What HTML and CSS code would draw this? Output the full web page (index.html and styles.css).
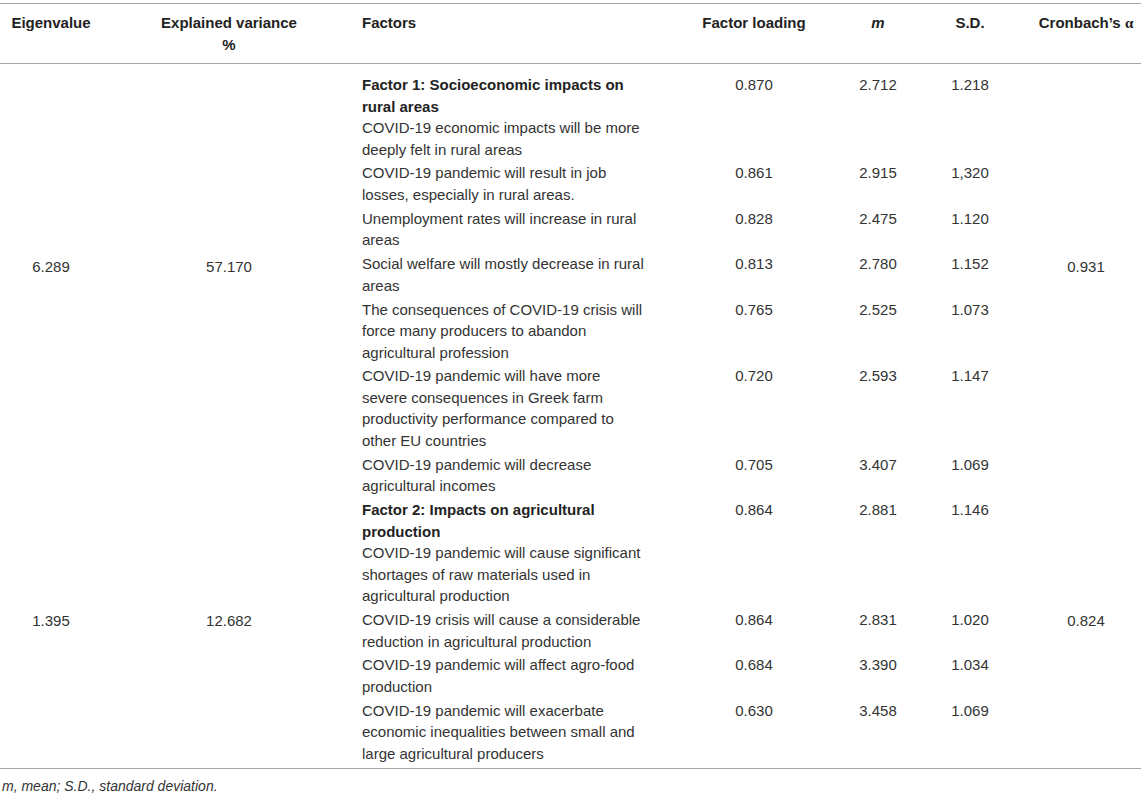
FILE: index.html
```html
<!DOCTYPE html>
<html lang="en">

<head>
    <meta charset="UTF-8">
    <meta name="viewport" content="width=device-width, initial-scale=1.0">
    <title>Factor analysis</title>
    <link rel="stylesheet" href="styles.css">
</head>

<body>
    <div class="table-wrap">
        <table class="data-table">
            <colgroup>
                <col class="col-eigen">
                <col class="col-variance">
                <col class="col-factors">
                <col class="col-loading">
                <col class="col-mean">
                <col class="col-sd">
                <col class="col-alpha">
            </colgroup>
            <thead>
                <tr>
                    <th>Eigenvalue</th>
                    <th>Explained variance<br>%</th>
                    <th class="text-left">Factors</th>
                    <th>Factor loading</th>
                    <th><em>m</em></th>
                    <th>S.D.</th>
                    <th class="alpha">Cronbach’s <span class="greek">α</span></th>
                </tr>
            </thead>
            <tbody>
                <tr>
                    <td class="group-cell" rowspan="7">6.289</td>
                    <td class="group-cell" rowspan="7">57.170</td>
                    <td class="text-left">
                        <div class="factor-title">Factor 1: Socioeconomic impacts on rural areas</div>
                        COVID-19 economic impacts will be more deeply felt in rural areas
                    </td>
                    <td>0.870</td>
                    <td>2.712</td>
                    <td>1.218</td>
                    <td class="group-cell alpha" rowspan="7">0.931</td>
                </tr>
                <tr>
                    <td class="text-left">COVID-19 pandemic will result in job losses, especially in rural areas.</td>
                    <td>0.861</td>
                    <td>2.915</td>
                    <td>1,320</td>
                </tr>
                <tr>
                    <td class="text-left">Unemployment rates will increase in rural areas</td>
                    <td>0.828</td>
                    <td>2.475</td>
                    <td>1.120</td>
                </tr>
                <tr>
                    <td class="text-left">Social welfare will mostly decrease in rural areas</td>
                    <td>0.813</td>
                    <td>2.780</td>
                    <td>1.152</td>
                </tr>
                <tr>
                    <td class="text-left">The consequences of COVID-19 crisis will force many producers to abandon agricultural profession</td>
                    <td>0.765</td>
                    <td>2.525</td>
                    <td>1.073</td>
                </tr>
                <tr>
                    <td class="text-left">COVID-19 pandemic will have more severe consequences in Greek farm productivity performance compared to other EU countries</td>
                    <td>0.720</td>
                    <td>2.593</td>
                    <td>1.147</td>
                </tr>
                <tr>
                    <td class="text-left">COVID-19 pandemic will decrease agricultural incomes</td>
                    <td>0.705</td>
                    <td>3.407</td>
                    <td>1.069</td>
                </tr>
                <tr>
                    <td class="group-cell group-last" rowspan="4">1.395</td>
                    <td class="group-cell group-last" rowspan="4">12.682</td>
                    <td class="text-left">
                        <div class="factor-title">Factor 2: Impacts on agricultural production</div>
                        COVID-19 pandemic will cause significant shortages of raw materials used in agricultural production
                    </td>
                    <td>0.864</td>
                    <td>2.881</td>
                    <td>1.146</td>
                    <td class="group-cell group-last alpha" rowspan="4">0.824</td>
                </tr>
                <tr>
                    <td class="text-left">COVID-19 crisis will cause a considerable reduction in agricultural production</td>
                    <td>0.864</td>
                    <td>2.831</td>
                    <td>1.020</td>
                </tr>
                <tr>
                    <td class="text-left">COVID-19 pandemic will affect agro-food production</td>
                    <td>0.684</td>
                    <td>3.390</td>
                    <td>1.034</td>
                </tr>
                <tr>
                    <td class="text-left">COVID-19 pandemic will exacerbate economic inequalities between small and large agricultural producers</td>
                    <td>0.630</td>
                    <td>3.458</td>
                    <td>1.069</td>
                </tr>
            </tbody>
        </table>
        <p class="table-note"><em>m, mean; S.D., standard deviation.</em></p>
    </div>
</body>

</html>
```

FILE: styles.css
```css
body {
    margin: 0;
    padding: 0;
    background-color: #ffffff;
    font-family: "Liberation Sans", Arial, sans-serif;
    color: #333333;
}

.table-wrap {
    padding-top: 3px;
}

.data-table {
    width: 1141px;
    border-collapse: collapse;
    table-layout: fixed;
    font-size: 15px;
}

.col-eigen {
    width: 102px;
}

.col-variance {
    width: 254px;
}

.col-factors {
    width: 334px;
}

.col-loading {
    width: 128px;
}

.col-mean {
    width: 120px;
}

.col-sd {
    width: 64px;
}

.col-alpha {
    width: 139px;
}

.data-table thead tr {
    border-top: 1px solid #a4a4a4;
    border-bottom: 1px solid #a4a4a4;
}

.data-table th {
    padding: 8px 5px 7px;
    line-height: 22px;
    font-weight: bold;
    color: #222222;
    text-align: center;
    vertical-align: top;
}

.data-table td {
    padding: 1.2px 5px;
    line-height: 21.5px;
    text-align: center;
    vertical-align: top;
}

.data-table tbody tr:first-child td {
    padding-top: 10px;
}

.data-table tbody tr:last-child {
    border-bottom: 1px solid #a4a4a4;
}

.data-table tbody tr:last-child td {
    padding-bottom: 4px;
}

.data-table td.group-cell {
    vertical-align: middle;
    padding-bottom: 38px;
}

.data-table td.group-last {
    padding-bottom: 26px;
}

.data-table .text-left {
    text-align: left;
    padding-left: 6px;
}

.data-table td.text-left {
    padding-right: 43.5px;
}

.data-table .alpha {
    padding-left: 34px;
}

.factor-title {
    font-weight: bold;
    color: #222222;
}

.greek {
    font-family: "Liberation Serif", serif;
}

.table-note {
    margin: 7px 0 0;
    padding-left: 2px;
    font-size: 14px;
    line-height: 20px;
    color: #333333;
}
```
